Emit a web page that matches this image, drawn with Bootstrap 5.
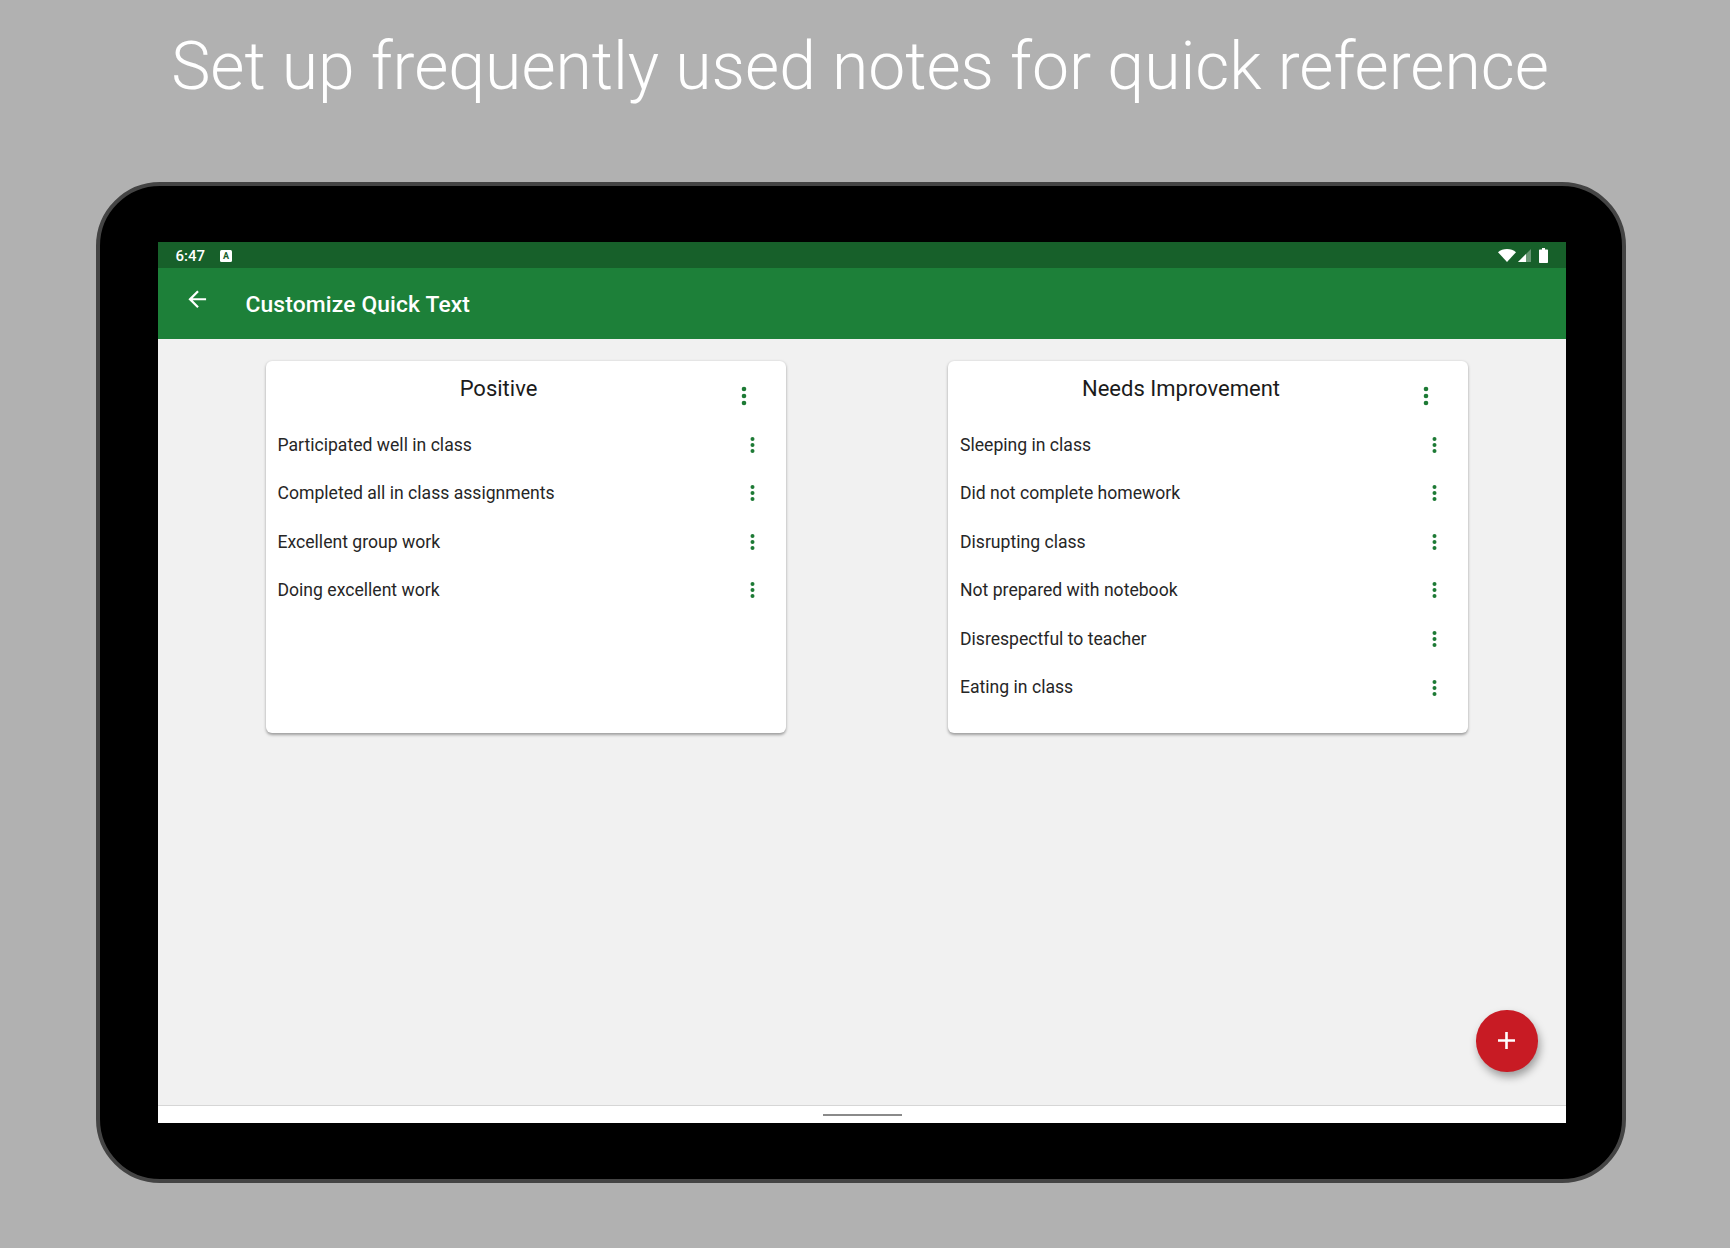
<!DOCTYPE html>
<html lang="en">
<head>
<meta charset="utf-8">
<title>Customize Quick Text</title>
<link rel="stylesheet" href="https://cdn.jsdelivr.net/npm/bootstrap@5.3.0/dist/css/bootstrap.min.css">
<style>
html,body{height:100%}
body{margin:0;background:#b1b1b1;font-family:Roboto,"Liberation Sans",sans-serif;overflow:hidden}
.caption-block{height:182px;padding-top:25px;color:#fff;font-weight:300;font-size:66px;line-height:84px;text-align:center;padding-right:10px;margin:0}
.device{width:1530px;height:1001px;margin-left:96px;background:#000;border:4px solid #444;border-radius:64px;padding:56px 56px 56px 58px}
.screen{height:100%;position:relative;background:#f1f1f1}
.status-strip{height:26px;background:#17602a;color:#fff;padding:0 18px 0 17.5px;font-size:15px;font-weight:500}
.status-left{margin-top:1.5px}
.a-chip{width:12px;height:12px;background:#fff;color:#17602a;border-radius:1.5px;font-size:9px;font-weight:700;line-height:12px;text-align:center;margin-left:15px}
.signal-icon{margin-left:2px}
.app-bar{height:71px;background:#1d8039;color:#fff}
.back-arrow{width:26.5px;height:26.5px;margin:-9px 35px 0 26px;display:block}
.app-title{font-size:22.8px;font-weight:500;margin:3px 0 0;line-height:68px;letter-spacing:.15px}
.content-area{padding:22px 0 0 107.5px;gap:162.5px}
.note-card{width:520px;height:372px;border:0;border-radius:6px;box-shadow:0 1.5px 3px rgba(0,0,0,.35)}
.note-head{height:59.5px;position:relative}
.note-title{position:absolute;left:0;width:466px;top:13px;text-align:center;font-size:22px;font-weight:400;line-height:30px;margin:0;color:#1b1b1b}
.head-dots{position:absolute;left:475px;top:25px}
.note-row{height:48.55px;padding:0 31px 0 12px;background:transparent;border:0;font-size:17.6px;color:#262626}
.fab-add{position:absolute;width:61.5px;height:61.5px;left:1318px;top:768px;border-radius:50%;border:0;background:#c81b24;box-shadow:2px 5px 9px rgba(0,0,0,.35);padding:0}
.nav-strip{height:18px;background:#fff;border-top:1px solid #d6d6d6;margin-top:auto}
.nav-pill{width:79px;height:2px;background:#8a8a8a;margin-top:8px}
</style>
</head>
<body>
<h1 class="caption-block">Set up frequently used notes for quick reference</h1>
<div class="device">
  <div class="screen d-flex flex-column">
    <div class="status-strip d-flex align-items-center">
      <span class="status-left">6:47</span>
      <span class="a-chip status-left">A</span>
      <span class="ms-auto d-flex align-items-center">
        <svg width="18" height="13" viewBox="0 0 18 13"><path d="M0 3.2C2.4 1.2 5.5 0 9 0s6.600 1.200 9 3.200L9 13z" fill="#fff"/></svg>
        <svg class="signal-icon" width="13" height="13" viewBox="0 0 13 13"><path d="M13 0V13H0z" fill="#fff" fill-opacity=".35"/><path d="M8 5V13H0z" fill="#fff"/></svg>
        <svg class="ms-2" width="9" height="15" viewBox="0 0 9 15"><path d="M3 0h3v1.500h2c.6 0 1 .4 1 1V14c0 .6-.4 1-1 1H1c-.6 0-1-.4-1-1V2.500c0-.6.4-1 1-1h2z" fill="#fff"/></svg>
      </span>
    </div>
    <div class="app-bar d-flex align-items-center">
      <svg class="back-arrow" viewBox="0 0 24 24"><path fill="#fff" d="M20 11H7.830l5.590-5.590L12 4l-8 8 8 8 1.410-1.410L7.830 13H20v-2z"/></svg>
      <h2 class="app-title">Customize Quick Text</h2>
    </div>
    <div class="content-area d-flex">
      <div class="card note-card">
        <div class="note-head">
          <h3 class="note-title">Positive</h3>
          <svg class="head-dots" width="6" height="20" viewBox="0 0 6 20"><g fill="#1d7a35"><circle cx="3" cy="3" r="2.300"/><circle cx="3" cy="10" r="2.300"/><circle cx="3" cy="17" r="2.300"/></g></svg>
        </div>
        <ul class="list-group list-group-flush">
          <li class="list-group-item note-row d-flex align-items-center justify-content-between">Participated well in class<svg width="5" height="16" viewBox="0 0 5 16"><g fill="#1d7a35"><circle cx="2.500" cy="2" r="2"/><circle cx="2.500" cy="8" r="2"/><circle cx="2.500" cy="14" r="2"/></g></svg></li>
          <li class="list-group-item note-row d-flex align-items-center justify-content-between">Completed all in class assignments<svg width="5" height="16" viewBox="0 0 5 16"><g fill="#1d7a35"><circle cx="2.500" cy="2" r="2"/><circle cx="2.500" cy="8" r="2"/><circle cx="2.500" cy="14" r="2"/></g></svg></li>
          <li class="list-group-item note-row d-flex align-items-center justify-content-between">Excellent group work<svg width="5" height="16" viewBox="0 0 5 16"><g fill="#1d7a35"><circle cx="2.500" cy="2" r="2"/><circle cx="2.500" cy="8" r="2"/><circle cx="2.500" cy="14" r="2"/></g></svg></li>
          <li class="list-group-item note-row d-flex align-items-center justify-content-between">Doing excellent work<svg width="5" height="16" viewBox="0 0 5 16"><g fill="#1d7a35"><circle cx="2.500" cy="2" r="2"/><circle cx="2.500" cy="8" r="2"/><circle cx="2.500" cy="14" r="2"/></g></svg></li>
        </ul>
      </div>
      <div class="card note-card">
        <div class="note-head">
          <h3 class="note-title">Needs Improvement</h3>
          <svg class="head-dots" width="6" height="20" viewBox="0 0 6 20"><g fill="#1d7a35"><circle cx="3" cy="3" r="2.300"/><circle cx="3" cy="10" r="2.300"/><circle cx="3" cy="17" r="2.300"/></g></svg>
        </div>
        <ul class="list-group list-group-flush">
          <li class="list-group-item note-row d-flex align-items-center justify-content-between">Sleeping in class<svg width="5" height="16" viewBox="0 0 5 16"><g fill="#1d7a35"><circle cx="2.500" cy="2" r="2"/><circle cx="2.500" cy="8" r="2"/><circle cx="2.500" cy="14" r="2"/></g></svg></li>
          <li class="list-group-item note-row d-flex align-items-center justify-content-between">Did not complete homework<svg width="5" height="16" viewBox="0 0 5 16"><g fill="#1d7a35"><circle cx="2.500" cy="2" r="2"/><circle cx="2.500" cy="8" r="2"/><circle cx="2.500" cy="14" r="2"/></g></svg></li>
          <li class="list-group-item note-row d-flex align-items-center justify-content-between">Disrupting class<svg width="5" height="16" viewBox="0 0 5 16"><g fill="#1d7a35"><circle cx="2.500" cy="2" r="2"/><circle cx="2.500" cy="8" r="2"/><circle cx="2.500" cy="14" r="2"/></g></svg></li>
          <li class="list-group-item note-row d-flex align-items-center justify-content-between">Not prepared with notebook<svg width="5" height="16" viewBox="0 0 5 16"><g fill="#1d7a35"><circle cx="2.500" cy="2" r="2"/><circle cx="2.500" cy="8" r="2"/><circle cx="2.500" cy="14" r="2"/></g></svg></li>
          <li class="list-group-item note-row d-flex align-items-center justify-content-between">Disrespectful to teacher<svg width="5" height="16" viewBox="0 0 5 16"><g fill="#1d7a35"><circle cx="2.500" cy="2" r="2"/><circle cx="2.500" cy="8" r="2"/><circle cx="2.500" cy="14" r="2"/></g></svg></li>
          <li class="list-group-item note-row d-flex align-items-center justify-content-between">Eating in class<svg width="5" height="16" viewBox="0 0 5 16"><g fill="#1d7a35"><circle cx="2.500" cy="2" r="2"/><circle cx="2.500" cy="8" r="2"/><circle cx="2.500" cy="14" r="2"/></g></svg></li>
        </ul>
      </div>
    </div>
    <div class="nav-strip d-flex justify-content-center"><div class="nav-pill"></div></div>
    <button class="fab-add d-flex align-items-center justify-content-center" type="button" aria-label="Add">
      <svg width="17" height="17" viewBox="0 0 17 17"><path fill="#fff" d="M7.200 0h2.600v7.200H17v2.600H9.800V17H7.200V9.800H0V7.200h7.200z"/></svg>
    </button>
  </div>
</div>
<script src="https://cdn.jsdelivr.net/npm/bootstrap@5.3.0/dist/js/bootstrap.bundle.min.js"></script>
</body>
</html>
